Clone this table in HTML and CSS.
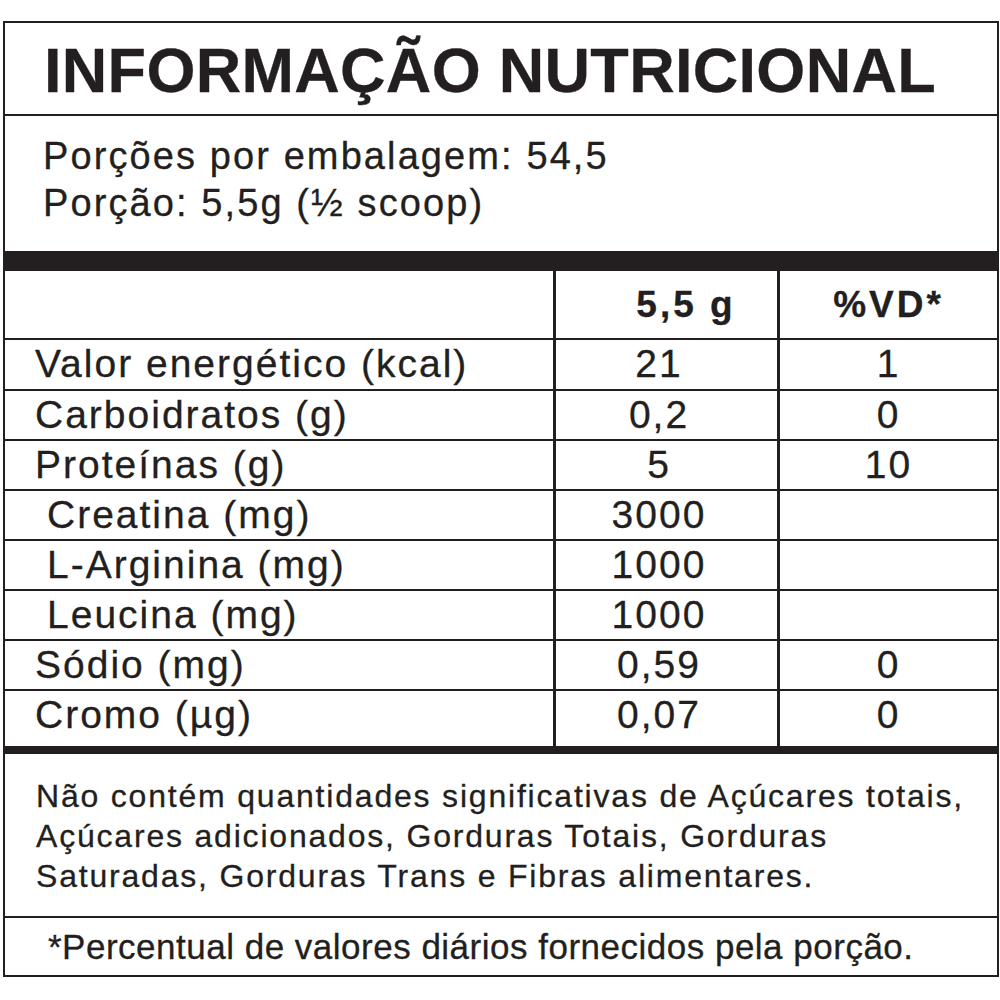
FILE: index.html
```html
<!DOCTYPE html>
<html lang="pt-BR">
<head>
<meta charset="utf-8">
<title>Informação Nutricional</title>
<link rel="stylesheet" href="styles.css">
</head>
<body>
<div class="label">
  <h1 class="title">INFORMAÇÃO NUTRICIONAL</h1>
  <div class="serving">
    <p>Porções por embalagem: 54,5</p>
    <p>Porção: 5,5g (½ scoop)</p>
  </div>
  <div class="facts">
    <div class="row head">
      <div class="cell name"></div>
      <div class="cell qty">5,5 g</div>
      <div class="cell vd">%VD*</div>
    </div>
    <div class="row first">
      <div class="cell name">Valor energético (kcal)</div>
      <div class="cell qty">21</div>
      <div class="cell vd">1</div>
    </div>
    <div class="row">
      <div class="cell name">Carboidratos (g)</div>
      <div class="cell qty">0,2</div>
      <div class="cell vd">0</div>
    </div>
    <div class="row">
      <div class="cell name">Proteínas (g)</div>
      <div class="cell qty">5</div>
      <div class="cell vd">10</div>
    </div>
    <div class="row">
      <div class="cell name sub">Creatina (mg)</div>
      <div class="cell qty">3000</div>
      <div class="cell vd"></div>
    </div>
    <div class="row">
      <div class="cell name sub">L-Arginina (mg)</div>
      <div class="cell qty">1000</div>
      <div class="cell vd"></div>
    </div>
    <div class="row">
      <div class="cell name sub">Leucina (mg)</div>
      <div class="cell qty">1000</div>
      <div class="cell vd"></div>
    </div>
    <div class="row">
      <div class="cell name">Sódio (mg)</div>
      <div class="cell qty">0,59</div>
      <div class="cell vd">0</div>
    </div>
    <div class="row last">
      <div class="cell name">Cromo (µg)</div>
      <div class="cell qty">0,07</div>
      <div class="cell vd">0</div>
    </div>
  </div>
  <p class="note">Não contém quantidades significativas de Açúcares totais,<br>Açúcares adicionados, Gorduras Totais, Gorduras<br>Saturadas, Gorduras Trans e Fibras alimentares.</p>
  <p class="foot">*Percentual de valores diários fornecidos pela porção.</p>
</div>
</body>
</html>
```

FILE: styles.css
```css
html, body {
  margin: 0;
  padding: 0;
  background: #ffffff;
}

body {
  font-family: "Liberation Sans", Arial, sans-serif;
  color: #231f20;
  -webkit-text-stroke: 0.3px #231f20;
}

.label {
  box-sizing: border-box;
  width: 996px;
  margin: 21px 0 0 3px;
  border: 2px solid #231f20;
}

.title {
  margin: 0;
  height: 93px;
  box-sizing: border-box;
  padding: 2px 0 0 39px;
  font-size: 63px;
  font-weight: 700;
  line-height: 91px;
  letter-spacing: 0.3px;
  white-space: nowrap;
  border-bottom: 2px solid #231f20;
}

.serving {
  height: 155px;
  box-sizing: border-box;
  padding: 17px 0 0 38px;
  border-bottom: 20px solid #231f20;
}

.serving p {
  margin: 0;
  font-size: 38px;
  line-height: 47px;
  letter-spacing: 2.1px;
  white-space: nowrap;
}

.facts {
  border-bottom: 8px solid #231f20;
}

.row {
  display: grid;
  grid-template-columns: 548px 224px 220px;
  height: 50px;
  box-sizing: border-box;
  border-top: 2px solid #231f20;
}

.row.head {
  height: 67px;
  border-top: 0;
}

.row.first {
  height: 51px;
}

.row.last {
  height: 57px;
}

.cell {
  box-sizing: border-box;
  font-size: 39px;
  line-height: 48px;
  letter-spacing: 2px;
  white-space: nowrap;
}

.cell.name {
  padding-left: 30px;
}

.cell.name.sub {
  padding-left: 42px;
}

.cell.qty {
  border-left: 3px solid #231f20;
  text-align: center;
  padding-right: 15px;
}

.cell.vd {
  border-left: 3px solid #231f20;
  text-align: center;
}

.head .cell {
  font-size: 37px;
  font-weight: 700;
  line-height: 67px;
  letter-spacing: 3px;
}

.head .cell.qty {
  padding-right: 0;
  padding-left: 39px;
}

.note {
  margin: 0;
  height: 164px;
  box-sizing: border-box;
  padding: 22px 0 0 31px;
  font-size: 32px;
  line-height: 40px;
  letter-spacing: 1.8px;
  white-space: nowrap;
  border-bottom: 2px solid #231f20;
}

.foot {
  margin: 0;
  height: 57px;
  box-sizing: border-box;
  padding-left: 43px;
  font-size: 35px;
  line-height: 57px;
  letter-spacing: 0.5px;
  white-space: nowrap;
}
```
